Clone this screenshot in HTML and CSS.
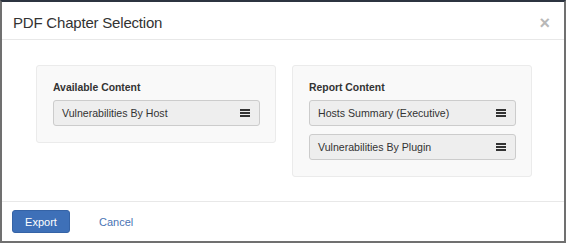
FILE: index.html
```html
<!DOCTYPE html>
<html lang="en">
<head>
    <meta charset="UTF-8">
    <title>PDF Chapter Selection</title>
    <link rel="stylesheet" href="styles.css">
</head>
<body>
    <div class="modal">
        <div class="modal-header">
            <span class="modal-title">PDF Chapter Selection</span>
            <span class="close-btn">&times;</span>
        </div>
        <div class="modal-body">
            <div class="panel">
                <div class="panel-title">Available Content</div>
                <div class="item">
                    <span>Vulnerabilities By Host</span>
                    <span class="handle"></span>
                </div>
            </div>
            <div class="panel">
                <div class="panel-title">Report Content</div>
                <div class="item">
                    <span>Hosts Summary (Executive)</span>
                    <span class="handle"></span>
                </div>
                <div class="item">
                    <span>Vulnerabilities By Plugin</span>
                    <span class="handle"></span>
                </div>
            </div>
        </div>
        <div class="modal-footer">
            <button class="btn-export">Export</button>
            <a class="cancel-link" href="#">Cancel</a>
        </div>
    </div>
</body>
</html>
```

FILE: styles.css
```css
body {
    margin: 0;
    font-family: 'Liberation Sans', Arial, sans-serif;
    background-color: #fff;
}
.modal {
    height: 243px;
    box-sizing: border-box;
    border: 2px solid #707070;
    border-top-color: #2c3440;
    background-color: #fff;
    display: flex;
    flex-direction: column;
}
.modal-header {
    height: 38px;
    box-sizing: border-box;
    border-bottom: 1px solid #e8e8e8;
    display: flex;
    align-items: center;
    justify-content: space-between;
    padding: 3px 14px 0 11px;
}
.modal-title {
    font-size: 15px;
    letter-spacing: -0.2px;
    color: #333;
}
.close-btn {
    font-size: 18px;
    color: #b8b8b8;
    font-weight: bold;
    padding-top: 2px;
}
.modal-body {
    flex: 1;
    display: flex;
    align-items: flex-start;
    gap: 16px;
    padding: 25px 32px 0 34px;
}
.panel {
    flex: 1;
    background-color: #f9f9f9;
    border: 1px solid #ebebeb;
    border-radius: 3px;
    padding: 16px 15px 16px 16px;
}
.panel-title {
    font-size: 10.4px;
    font-weight: bold;
    color: #333;
    margin-bottom: 7px;
}
.item {
    height: 24px;
    background-color: #eeeeee;
    border: 1px solid #cccccc;
    border-radius: 3px;
    display: flex;
    align-items: center;
    justify-content: space-between;
    padding: 0 9px 0 8px;
    font-size: 10.6px;
    color: #333;
    margin-bottom: 8px;
}
.item:last-child {
    margin-bottom: 0;
}
.handle {
    width: 10px;
    height: 2px;
    background-color: #333;
    box-shadow: 0 -3px 0 #333, 0 3px 0 #333;
}
.modal-footer {
    height: 39px;
    border-top: 1px solid #e8e8e8;
    display: flex;
    align-items: center;
    padding: 0 10px;
}
.btn-export {
    width: 58px;
    height: 23px;
    background-color: #3e70b8;
    border: 1px solid #3563a6;
    border-radius: 3px;
    color: #fff;
    font-family: 'Liberation Sans', Arial, sans-serif;
    font-size: 11px;
    padding: 0;
    margin-right: 29px;
}
.cancel-link {
    font-size: 11px;
    color: #4a74b4;
    text-decoration: none;
}
```
